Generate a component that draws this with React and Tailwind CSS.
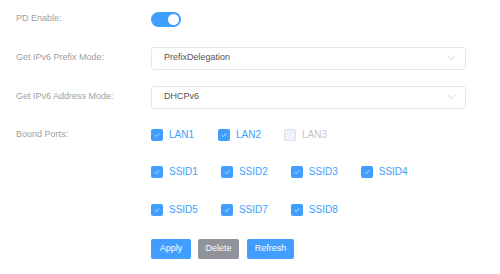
import React from "react";

function Check({ label, disabled = false, mr = "mr-[24px]" }) {
  return (
    <div className={`flex items-center ${mr}`}>
      {disabled ? (
        <span className="w-[12px] h-[12px] rounded-[2px] border border-[#dcdfe6] bg-[#edf2fc] box-border" />
      ) : (
        <span className="w-[12px] h-[12px] rounded-[2px] bg-[#409eff] flex items-center justify-center">
          <svg width="8" height="8" viewBox="0 0 8 8" fill="none">
            <path d="M1.8 4.2 L3.4 5.6 L6.2 2.4" stroke="#cfe4ff" strokeWidth="0.9" />
          </svg>
        </span>
      )}
      <span className={`ml-[6px] text-[10px] leading-none ${disabled ? "text-[#c0c4cc]" : "text-[#409eff]"}`}>
        {label}
      </span>
    </div>
  );
}

function Select({ value }) {
  return (
    <div className="w-[315px] h-[23px] border border-[#e4e7ed] rounded-[3px] flex items-center justify-between pl-[12px] pr-[9px] box-border">
      <span className="text-[9px] text-[#555]">{value}</span>
      <svg width="9" height="6" viewBox="0 0 9 6" fill="none">
        <path d="M1 1.2 L4.5 4.6 L8 1.2" stroke="#c9ccd2" strokeWidth="0.9" />
      </svg>
    </div>
  );
}

function Row({ label, h, children }) {
  return (
    <div className={`flex items-center ${h}`}>
      <div className="w-[135px] text-[9px] text-[#a0a0a0]">{label}</div>
      <div className="flex items-center">{children}</div>
    </div>
  );
}

export default function App() {
  return (
    <div
      className="w-[500px] h-[274px] bg-white pl-[16px] box-border"
      style={{ fontFamily: '"Liberation Sans", Arial, sans-serif' }}
    >
      <Row label="PD Enable:" h="h-[38px]">
        <div className="w-[30px] h-[15px] rounded-full bg-[#409eff] flex items-center justify-end pr-[2px] box-border">
          <span className="w-[11px] h-[11px] rounded-full bg-white" />
        </div>
      </Row>
      <Row label="Get IPv6 Prefix Mode:" h="h-[40px]">
        <Select value="PrefixDelegation" />
      </Row>
      <Row label="Get IPv6 Address Mode:" h="h-[38px]">
        <Select value="DHCPv6" />
      </Row>
      <Row label="Bound Ports:" h="h-[37px]">
        <Check label="LAN1" />
        <Check label="LAN2" mr="mr-[23px]" />
        <Check label="LAN3" disabled mr="" />
      </Row>
      <Row label="" h="h-[38px]">
        <Check label="SSID1" mr="mr-[23px]" />
        <Check label="SSID2" mr="mr-[23px]" />
        <Check label="SSID3" mr="mr-[23px]" />
        <Check label="SSID4" mr="" />
      </Row>
      <Row label="" h="h-[38px]">
        <Check label="SSID5" mr="mr-[23px]" />
        <Check label="SSID7" mr="mr-[23px]" />
        <Check label="SSID8" mr="" />
      </Row>
      <Row label="" h="h-[40px]">
        <div className="flex gap-[7px]">
          <button className="h-[20px] w-[40px] rounded-[2px] bg-[#409eff] text-white text-[9px]">Apply</button>
          <button className="h-[20px] w-[41px] rounded-[2px] bg-[#909399] text-white text-[9px]">Delete</button>
          <button className="h-[20px] w-[47px] ml-[1px] rounded-[2px] bg-[#409eff] text-white text-[9px]">Refresh</button>
        </div>
      </Row>
    </div>
  );
}
